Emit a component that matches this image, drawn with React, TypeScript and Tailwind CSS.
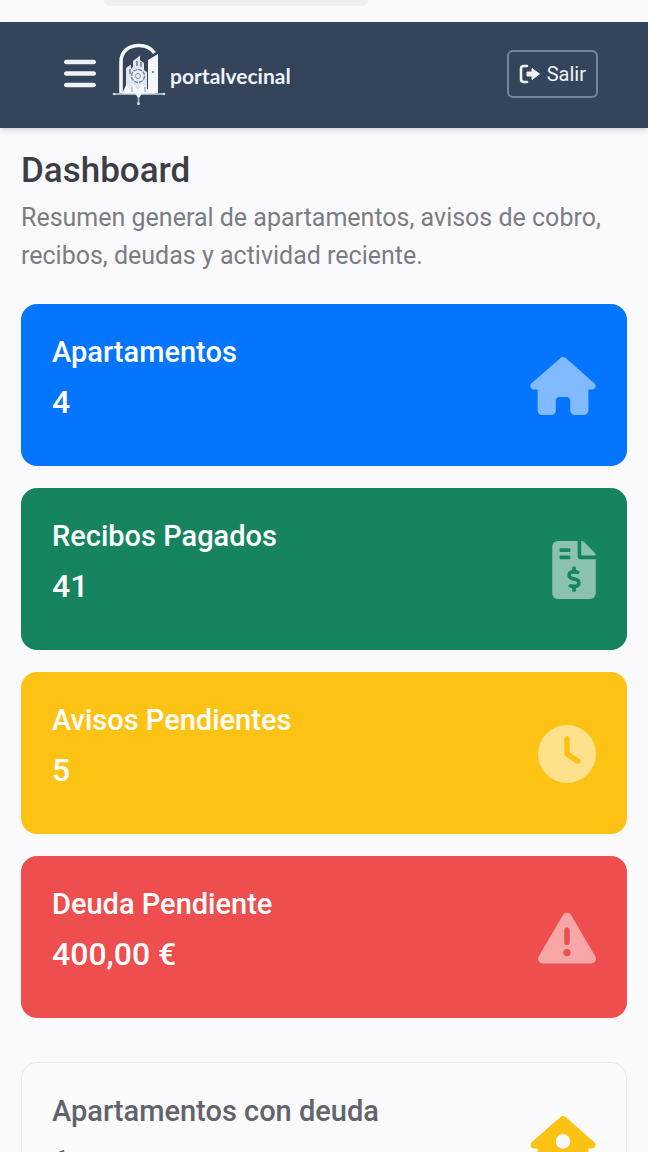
import React from 'react';
import type { IconType } from 'react-icons';
import { FaFileInvoiceDollar } from 'react-icons/fa';
import { FaBars, FaClock, FaHouse, FaHouseUser, FaTriangleExclamation } from 'react-icons/fa6';
import { clsx } from 'clsx';

interface StatCardProps {
  title: string;
  value: string;
  icon: IconType;
  className: string;
  iconClassName: string;
}

const stats: StatCardProps[] = [
  {
    title: 'Apartamentos',
    value: '4',
    icon: FaHouse,
    className: 'bg-[#0475ff] px-[31px]',
    iconClassName: 'w-[66px] text-white/50',
  },
  {
    title: 'Recibos Pagados',
    value: '41',
    icon: FaFileInvoiceDollar,
    className: 'bg-[#16845f] px-[31px]',
    iconClassName: 'w-11 rounded-md text-white/50',
  },
  {
    title: 'Avisos Pendientes',
    value: '5',
    icon: FaClock,
    className: 'bg-[#fdc314] px-[31px]',
    iconClassName: 'w-[58px] text-white/50',
  },
  {
    title: 'Deuda Pendiente',
    value: '400,00 €',
    icon: FaTriangleExclamation,
    className: 'bg-[#ee4e4e] px-[31px]',
    iconClassName: 'w-[58px] text-white/50',
  },
];

function StatCard({ title, value, icon: Icon, className, iconClassName }: StatCardProps) {
  return (
    <article className={clsx('flex items-center justify-between rounded-2xl pt-7 pb-[42px]', className)}>
      <div>
        <h2 className="text-[29px] leading-10 font-medium">{title}</h2>
        <p className="mt-2 text-[32px] leading-[44px] font-medium">{value}</p>
      </div>
      <Icon className={clsx('mt-4 h-[58px] shrink-0', iconClassName)} aria-hidden="true" />
    </article>
  );
}

function LogoutIcon() {
  return (
    <svg viewBox="0 0 22 20" className="h-5 w-[22px]" fill="none" aria-hidden="true">
      <path
        d="M8 2H5C3 2 2 3 2 5V15C2 17 3 18 5 18H8"
        stroke="currentColor"
        strokeWidth="2.600"
        strokeLinecap="round"
      />
      <path
        d="M8 8H13V4.500L20.500 10L13 15.500V12H8Z"
        fill="currentColor"
        stroke="currentColor"
        strokeWidth="1"
        strokeLinejoin="round"
      />
    </svg>
  );
}

function Logo() {
  return (
    <a href="#" className="flex items-center gap-1" aria-label="portalvecinal">
      <svg viewBox="0 0 54 64" className="h-16 w-[54px]" fill="none">
        {/* Arch */}
        <path d="M9 51V20C9 9 17 3.500 27 3.500C34 3.500 39 6 42.500 11" stroke="#f3f7fc" strokeWidth="3.600" />
        {/* Skyline */}
        <path
          d="M14 50V26L19 22.500V27L21 25V19L25 16L28 13.500V18L32 21V28L35 30V50Z"
          fill="#dfe8f2"
        />
        <path d="M18 27V32M25 19V24M29 20V25" stroke="#33445b" strokeWidth="1" />
        {/* Gear */}
        <circle cx="26" cy="34" r="6.500" fill="#eaf1f8" stroke="#71829a" strokeWidth="1.300" strokeDasharray="4 1" />
        <circle cx="26" cy="34" r="2.500" stroke="#8797ab" strokeWidth="1" />
        {/* Open door */}
        <path d="M36 18L46 12V51H40L36 46Z" fill="#f3f7fc" />
        <circle cx="41" cy="30" r="1" fill="#5b6c83" />
        {/* Neighbours */}
        <path d="M10 52L14 43L18 48L21 42L26 48L30 42L34 48L38 45L43 52Z" fill="#f8fbff" />
        <path d="M20 45V50M33 45V50" stroke="#8797ab" strokeWidth="1" />
        {/* Ground line with pendant */}
        <path d="M1 52H53" stroke="#cdd7e3" strokeWidth="1.500" />
        <path d="M23 51H30L26.500 57Z" fill="#f8fbff" />
        <path d="M26.500 55V63" stroke="#aebccc" strokeWidth="1.500" />
        <circle cx="2" cy="52" r="1.300" fill="#cdd7e3" />
        <circle cx="52" cy="52" r="1.300" fill="#cdd7e3" />
        <circle cx="26.500" cy="61.500" r="1.500" fill="#cdd7e3" />
      </svg>
      <span className="mt-1 font-[Lato,sans-serif] text-[21px] leading-6 font-bold text-[#eef3f8]">portalvecinal</span>
    </a>
  );
}

export default function App() {
  return (
    <div className="h-screen overflow-hidden bg-[#fafafd] font-[Roboto,sans-serif] text-white">
      <div className="h-[22px] px-[104px]">
        <div className="h-[6px] w-3/5 rounded-b-full bg-[#efeff1]" />
      </div>

      <header className="flex h-[106px] items-center justify-between bg-[#33445b] pr-[50px] pb-[3px] pl-16 shadow-md">
        <div className="flex items-center gap-4">
          <button type="button" aria-label="Menú" className="text-[#eef3f8]">
            <FaBars className="h-[37px] w-8" />
          </button>
          <Logo />
        </div>
        <button
          type="button"
          className="flex h-12 items-center gap-[6px] rounded-md border-2 border-[#76859a] px-[10px] text-xl text-[#eef3f8]"
        >
          <LogoutIcon />
          Salir
        </button>
      </header>

      <main className="px-[21px] pt-[21px]">
        <h1 className="text-[35px] leading-[44px] font-medium text-[#3b3e46]">Dashboard</h1>
        <p className="mt-[6px] text-[25px] leading-[38px] text-[#7b7d82]">
          Resumen general de apartamentos, avisos de cobro, recibos, deudas y actividad reciente.
        </p>

        <section className="mt-[29px] flex flex-col gap-[22px]">
          {stats.map((stat) => (
            <StatCard key={stat.title} {...stat} />
          ))}
        </section>

        <section className="mt-11 text-[#62646a]">
          <StatCard
            title="Apartamentos con deuda"
            value="1"
            icon={FaHouseUser}
            className="border border-[#e8e8ef] bg-[#fbfbfe] px-[30px]"
            iconClassName="w-[66px] text-[#fdc314]"
          />
        </section>
      </main>
    </div>
  );
}
